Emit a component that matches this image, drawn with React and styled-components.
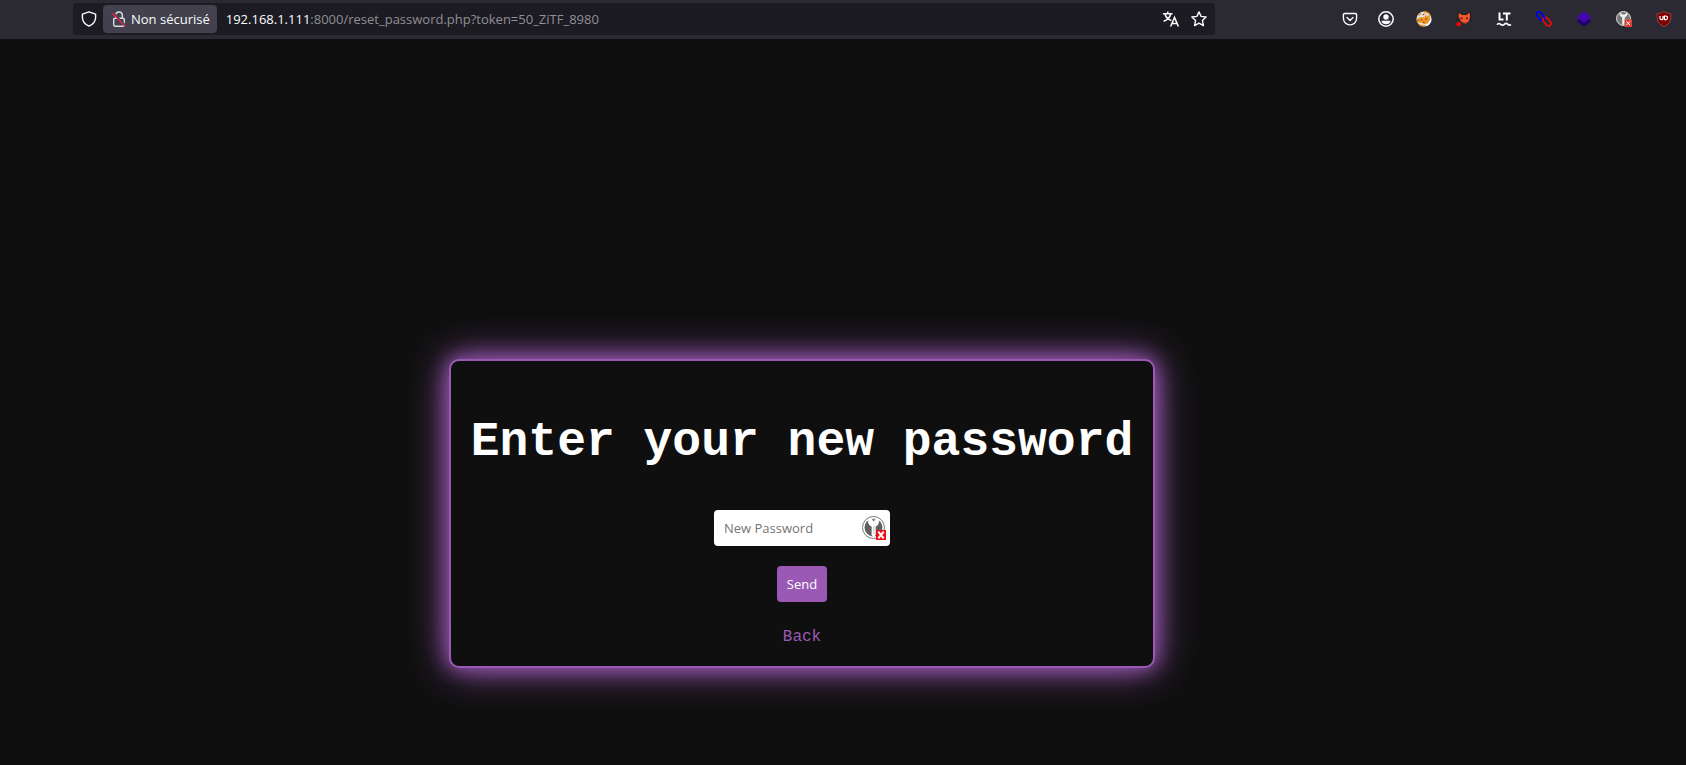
import React, { useState } from 'react'
import styled, { createGlobalStyle } from 'styled-components'

const browserTools = [
  { label: 'Pocket', Icon: PocketIcon },
  { label: 'Compte', Icon: AccountIcon },
]

const extensions = [
  { label: 'Cookies', Icon: CookieIcon },
  { label: 'FoxyProxy', Icon: FoxIcon },
  { label: 'LanguageTool', Icon: LanguageIcon },
  { label: 'Liens', Icon: ChainIcon },
  { label: 'Calques', Icon: LayersIcon },
  { label: 'KeePassXC', Icon: KeyToolIcon },
  { label: 'uBlock Origin', Icon: ShieldToolIcon },
]

export default function App() {
  return (
    <>
      <GlobalStyle />
      <Toolbar />
      <ResetPassword />
    </>
  )
}

function Toolbar() {
  return (
    <ToolbarContainer>
      <AddressBar>
        <IconButton type="button" aria-label="Protection" $width={28}>
          <ShieldIcon />
        </IconButton>
        <SecurityButton type="button">
          <LockIcon />
          Non sécurisé
        </SecurityButton>
        <Url>
          <strong>192.168.1.111</strong>:8000/reset_password.php?token=50_ZiTF_8980
        </Url>
        <IconButton type="button" aria-label="Traduire" $width={28}>
          <TranslateIcon />
        </IconButton>
        <IconButton type="button" aria-label="Marque-page" $width={28}>
          <StarIcon />
        </IconButton>
      </AddressBar>
      <Tools>
        {browserTools.map(({ label, Icon }) => (
          <IconButton type="button" key={label} aria-label={label} $width={36}>
            <Icon />
          </IconButton>
        ))}
        {extensions.map(({ label, Icon }) => (
          <IconButton type="button" key={label} aria-label={label} $width={40}>
            <Icon />
          </IconButton>
        ))}
      </Tools>
    </ToolbarContainer>
  )
}

function ResetPassword() {
  const [password, setPassword] = useState('')

  return (
    <Main>
      <Card>
        <Title>Enter your new password</Title>
        <Form onSubmit={(event) => event.preventDefault()}>
          <Field>
            <PasswordInput
              type="password"
              aria-label="New Password"
              placeholder="New Password"
              value={password}
              onChange={(e) => setPassword(e.target.value)}
            />
            <FieldIcon>
              <KeyFieldIcon />
            </FieldIcon>
          </Field>
          <SendButton type="submit">Send</SendButton>
        </Form>
        <BackLink href="#">Back</BackLink>
      </Card>
    </Main>
  )
}

function ShieldIcon() {
  return (
    <svg width="16" height="16" viewBox="0 0 16 16" fill="none" stroke="#fbfbfe" strokeWidth="1.4" strokeLinejoin="round">
      <path d="M8 .8 14.6 3.2v3.4c0 3.6-2.4 6.8-6.6 8.6-4.2-1.8-6.6-5-6.6-8.6V3.2z" />
    </svg>
  )
}

function LockIcon() {
  return (
    <svg width="16" height="16" viewBox="0 0 16 16" fill="none" stroke="#dcdce2" strokeWidth="1.4">
      <path d="M4.7 7V4.3a3.3 3.3 0 0 1 6.6 0V7" />
      <rect x="2.7" y="7.2" width="10.6" height="8" rx="1.4" />
      <path d="M1.8 1.4 15 14.7" stroke="#42414d" strokeWidth="1.6" />
      <path d="M1 2 14.5 15.5" stroke="#e22850" strokeWidth="1.4" />
    </svg>
  )
}

function TranslateIcon() {
  return (
    <svg width="16" height="16" viewBox="0 0 16 16" fill="none" stroke="#fbfbfe" strokeWidth="1.5">
      <path d="M0 2.7h9.5M4.8.5v2.2M2 3c.8 3.2 3 5.3 6.3 6.6M7.700 3C6.800 6.500 4.500 9 .6 10.300" />
      <path d="m7.600 15.500 3.900-9 3.900 9M9 12.600h5" />
    </svg>
  )
}

function StarIcon() {
  return (
    <svg width="16" height="16" viewBox="0 0 16 16" fill="none" stroke="#fbfbfe" strokeWidth="1.4" strokeLinejoin="round">
      <path d="m8 .9 2.1 4.5 5 .6-3.7 3.4 1 5.2L8 12.200l-4.400 2.400 1-5.200L.9 6l5-.6z" />
    </svg>
  )
}

function PocketIcon() {
  return (
    <svg width="16" height="16" viewBox="0 0 16 16" fill="none" stroke="#fbfbfe" strokeWidth="1.4" strokeLinecap="round" strokeLinejoin="round">
      <path d="M2.700 2.500h10.600c.8 0 1.300.5 1.300 1.300v3.500a6.600 6.600 0 0 1-13.200 0V3.800c0-.8.5-1.300 1.300-1.300z" />
      <path d="m5 6.600 3 2.900 3-2.900" />
    </svg>
  )
}

function AccountIcon() {
  return (
    <svg width="16" height="16" viewBox="0 0 16 16">
      <circle cx="8" cy="8" r="7.2" fill="none" stroke="#fbfbfe" strokeWidth="1.5" />
      <circle cx="8" cy="6" r="2.7" fill="#fbfbfe" />
      <path d="M3.400 9.700h9.200c-.4 2.300-2.200 3.600-4.600 3.600S3.800 12 3.400 9.700z" fill="#fbfbfe" />
    </svg>
  )
}

function CookieIcon() {
  return (
    <svg width="16" height="16" viewBox="0 0 16 16">
      <circle cx="8" cy="8" r="7.6" fill="#e2e0dc" />
      <path d="M1.500 7.500 5 6l3 .5 2-3 1 2 2.500-2 .5 5.500-2.500 3.500-3.500.5L5 11.500 1 12z" fill="#ee9420" />
      <path d="M8 .8c3 0 5 1.500 6 3.200M2.500 4.500 5 2M3 13.500c2 1.500 4 1.800 6 1.300" stroke="#e88c18" strokeWidth="1.4" fill="none" />
      <path d="m4.500 8.500 2 .5M9 8.500l2-1M7 11l1.500.5M1 9l1.500 1M6.500 4l2-1" stroke="#70491d" strokeWidth="1" fill="none" />
      <path d="m11 14.500 2.500-2.500 1.500-3" stroke="#fff" strokeWidth="1.3" fill="none" />
    </svg>
  )
}

function FoxIcon() {
  return (
    <svg width="16" height="16" viewBox="0 0 16 16">
      <path d="M2.500.8 6 3.500h4.500L14 .8l.7 5.200-1 4L9 14 4.500 10.500 2 6z" fill="#f2582e" stroke="#24191c" strokeWidth="1" />
      <path d="m0 7 2.500 1M0 10l3-.8M16 7l-2.500 1m2.500 2-3-.8" stroke="#201a20" strokeWidth=".8" />
      <path d="m4.500 6 2.700 1.500-2.200.7zm7.500 0L9.300 7.500l2.200.7z" fill="#35171b" />
      <path d="m7.500 11.500 1.200 1 1.200-1" stroke="#35171b" fill="none" />
      <circle cx="2.600" cy="13.200" r="2.300" fill="#f50000" />
    </svg>
  )
}

function LanguageIcon() {
  return (
    <svg width="16" height="16" viewBox="0 0 16 16" fill="none" stroke="#fff" strokeWidth="2">
      <path d="M3.500 1.500v7h4M7 2.500h7.500M10.800 2v7.500" />
      <path d="M1 13.700c1.200-1.500 2.400-1.500 3.600-.4s2.500 1.100 3.700 0 2.500-1.100 3.600 0 2.100 1 3.100.2" strokeWidth="1.700" />
    </svg>
  )
}

function ChainIcon() {
  return (
    <svg width="16" height="16" viewBox="0 0 16 16" fill="none" strokeWidth="1.700">
      <rect x="-.3" y="2.500" width="9.600" height="5" rx="2.500" transform="rotate(50 4.500 5)" stroke="#0000f0" />
      <rect x="6.200" y="8.200" width="9.600" height="5" rx="2.500" transform="rotate(50 11 10.700)" stroke="#ee0808" />
      <path d="m7 5 2 2.500" stroke="#0000f0" />
    </svg>
  )
}

function LayersIcon() {
  return (
    <svg width="16" height="16" viewBox="0 0 16 16">
      <path d="m.3 10 7.700-4 7.700 4L8 15.500z" fill="#20006e" />
      <path d="M.3 6.300 8 .4l7.700 5.900L8 11.700z" fill="#4208b0" />
    </svg>
  )
}

function KeyToolIcon() {
  return (
    <svg width="16" height="16" viewBox="0 0 16 16">
      <circle cx="7.500" cy="7.500" r="7" fill="#777" stroke="#ddd" />
      <path d="M4 1.200c-1 2.500 0 4.300 2.200 5v7.600h2.600V6.200C11 5.500 12 3.700 11 1.200L8.800 3.500H6.200z" fill="#f1f1f1" />
      <rect x="8.500" y="8.500" width="7.500" height="7.500" fill="#df4035" />
      <path d="m10.500 10.500 3.500 3.500m0-3.500L10.500 14" stroke="#fff" strokeWidth="1" />
    </svg>
  )
}

function ShieldToolIcon() {
  return (
    <svg width="16" height="16" viewBox="0 0 16 16" fill="none">
      <path d="M8 .5c2 1.300 4.300 2 6.800 2V7c0 4-2.500 6.700-6.800 8.600C3.700 13.700 1.200 11 1.200 7V2.500C3.700 2.500 6 1.800 8 .5z" fill="#800000" stroke="#a34a4e" strokeWidth=".8" />
      <path d="M4 5v2.200a1.500 1.500 0 0 0 3 0V5M8.400 5v3.700h1.300a1.850 1.850 0 0 0 0-3.700z" stroke="#fff" strokeWidth="1.200" />
    </svg>
  )
}

function KeyFieldIcon() {
  return (
    <svg width="24" height="24" viewBox="0 0 24 24">
      <circle cx="11.500" cy="11.500" r="11" fill="#fff" stroke="#777" strokeWidth="1" />
      <circle cx="11.500" cy="11.500" r="9" fill="#606060" />
      <path d="M7 2.500C5 6 6.500 9.200 9.600 10.500V19l1.900 2 2.200-2v-8.500C16.800 9.200 18 6 16 2.500z" fill="#fff" />
      <path d="M9.700 3.300h3.800l-1.900 2z" fill="#555" />
      <path d="M11.800 10v8" stroke="#aaa" strokeWidth=".7" />
      <rect x="14" y="14" width="10" height="10" fill="#f20d16" />
      <path d="m16.300 15.700 5.400 6.600m0-6.600-5.400 6.600" stroke="#fff" strokeWidth="2" />
    </svg>
  )
}

const GlobalStyle = createGlobalStyle`
  * {
    box-sizing: border-box;
  }
  body {
    margin: 0;
    background-color: #0f0f0f;
    color: #ffffff;
    font-family: "Courier New", "Liberation Mono", monospace;
    font-size: 16px;
  }
`

const ToolbarContainer = styled.header`
  display: flex;
  align-items: center;
  justify-content: space-between;
  height: 39px;
  padding: 0 2px 1px 73px;
  background-color: #2b2a33;
  font-family: "Open Sans", "Noto Sans", sans-serif;
  font-size: 13px;
`

const AddressBar = styled.div`
  display: flex;
  align-items: center;
  flex: 0 1 1142px;
  min-width: 0;
  height: 32px;
  padding: 0 2px;
  border-radius: 4px;
  background-color: #1c1b22;
`

const IconButton = styled.button`
  display: flex;
  align-items: center;
  justify-content: center;
  flex: none;
  width: ${props => props.$width}px;
  height: 28px;
  padding: 0;
  border: none;
  background: none;
  cursor: pointer;
`

const SecurityButton = styled.button`
  display: flex;
  align-items: center;
  flex: none;
  gap: 4px;
  height: 28px;
  padding: 0 7px 0 8px;
  border: none;
  border-radius: 4px;
  background-color: #42414d;
  color: #fbfbfe;
  font: inherit;
  cursor: pointer;
`

const Url = styled.div`
  flex: 1;
  overflow: hidden;
  padding-left: 9px;
  color: #8f8f95;
  white-space: nowrap;
  strong {
    color: #fbfbfe;
    font-weight: 400;
  }
`

const Tools = styled.div`
  display: flex;
  flex: none;
`

const Main = styled.main`
  display: flex;
  justify-content: center;
  padding: 320px 82px 96px 0;
`

const Card = styled.section`
  display: flex;
  flex-direction: column;
  align-items: center;
  padding: 20px;
  border: 2px solid #9b59b6;
  border-radius: 10px;
  box-shadow: 0 0 20px #9b59b6, 0 0 40px #9b59b6;
  background-color: #0f0f0f;
`

const Title = styled.h1`
  margin: 34px 0 31px;
  font-size: 48px;
  line-height: 54px;
`

const Form = styled.form`
  display: flex;
  flex-direction: column;
  align-items: center;
  gap: 20px;
  margin: 10px 0 26px;
`

const Field = styled.div`
  position: relative;
`

const PasswordInput = styled.input`
  display: block;
  width: 176px;
  height: 36px;
  padding: 0 34px 0 10px;
  border: none;
  border-radius: 4px;
  background-color: #ffffff;
  color: #0f0f0f;
  font-family: "Open Sans", "Noto Sans", sans-serif;
  font-size: 13px;
  &::placeholder {
    color: #757575;
  }
`

const FieldIcon = styled.span`
  position: absolute;
  top: 6px;
  right: 4px;
  display: flex;
`

const SendButton = styled.button`
  height: 36px;
  padding: 0 10px;
  border: none;
  border-radius: 4px;
  background-color: #9b59b6;
  color: #ffffff;
  font-family: "Open Sans", "Noto Sans", sans-serif;
  font-size: 13px;
  cursor: pointer;
`

const BackLink = styled.a`
  color: #9b59b6;
  line-height: 18px;
  text-decoration: none;
`
